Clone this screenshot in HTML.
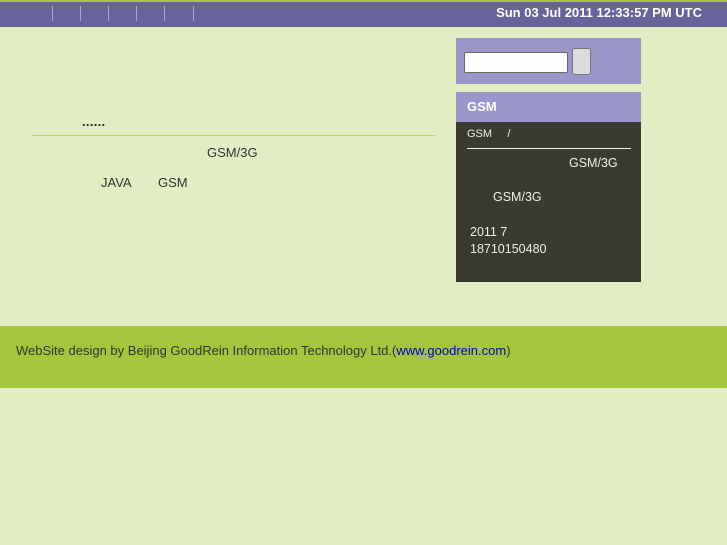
<!DOCTYPE html>
<html><head><style>
body{margin:0;width:727px;height:545px;background:#e2edc4;font-family:"Liberation Sans",sans-serif;position:relative;overflow:hidden;font-size:13px;color:#333}
.a{position:absolute}
</style></head><body>
<div class="a" style="left:0;top:0;width:727px;height:2px;background:#a3c63c"></div>
<div class="a" style="left:0;top:2px;width:727px;height:25px;background:#67629a"></div>
<div class="a" style="left:52px;top:6px;width:1px;height:15px;background:#a9a5cc"></div>
<div class="a" style="left:80px;top:6px;width:1px;height:15px;background:#a9a5cc"></div>
<div class="a" style="left:108px;top:6px;width:1px;height:15px;background:#a9a5cc"></div>
<div class="a" style="left:136px;top:6px;width:1px;height:15px;background:#a9a5cc"></div>
<div class="a" style="left:164px;top:6px;width:1px;height:15px;background:#a9a5cc"></div>
<div class="a" style="left:193px;top:6px;width:1px;height:15px;background:#a9a5cc"></div>
<div class="a" style="right:25px;top:5px;color:#fff;font-weight:bold;font-size:13px">Sun 03 Jul 2011 12:33:57 PM UTC</div>
<div class="a" style="left:82px;top:114px;font-weight:bold;font-size:13px;letter-spacing:0.3px;color:#222">......</div>
<div class="a" style="left:32px;top:135px;width:403px;height:1px;background:#bcd56a"></div>
<div class="a" style="left:207px;top:145px">GSM/3G</div>
<div class="a" style="left:101px;top:175px">JAVA</div>
<div class="a" style="left:158px;top:175px">GSM</div>
<div class="a" style="left:456px;top:38px;width:185px;height:46px;background:#9a95cb"></div>
<div class="a" style="left:464px;top:52px;width:102px;height:19px;background:#fff;border:1px solid #666;border-radius:2px"></div>
<div class="a" style="left:572px;top:48px;width:17px;height:25px;background:#ddd;border:1px solid #777;border-radius:3px"></div>
<div class="a" style="left:456px;top:92px;width:185px;height:30px;background:#9a95cb;color:#fff;font-weight:bold;font-size:13px;line-height:30px;text-indent:11px">GSM</div>
<div class="a" style="left:456px;top:122px;width:185px;height:160px;background:#3a3a2e;color:#eee"></div>
<div class="a" style="left:467px;top:128px;color:#eee;font-size:11px">GSM &nbsp;&nbsp;&nbsp; /</div>
<div class="a" style="left:467px;top:148px;width:164px;height:1px;background:#eee"></div>
<div class="a" style="left:569px;top:156px;color:#eee;font-size:12.5px">GSM/3G</div>
<div class="a" style="left:493px;top:190px;color:#eee;font-size:12.5px">GSM/3G</div>
<div class="a" style="left:470px;top:225px;color:#eee;font-size:12.5px">2011 7</div>
<div class="a" style="left:470px;top:242px;color:#eee;font-size:12.5px">18710150480</div>
<div class="a" style="left:0;top:326px;width:727px;height:62px;background:#a3c63c"></div>
<div class="a" style="left:16px;top:343px;color:#333">WebSite design by Beijing GoodRein Information Technology Ltd.(<span style="color:#00c">www.goodrein.com</span>)</div>
</body></html>
